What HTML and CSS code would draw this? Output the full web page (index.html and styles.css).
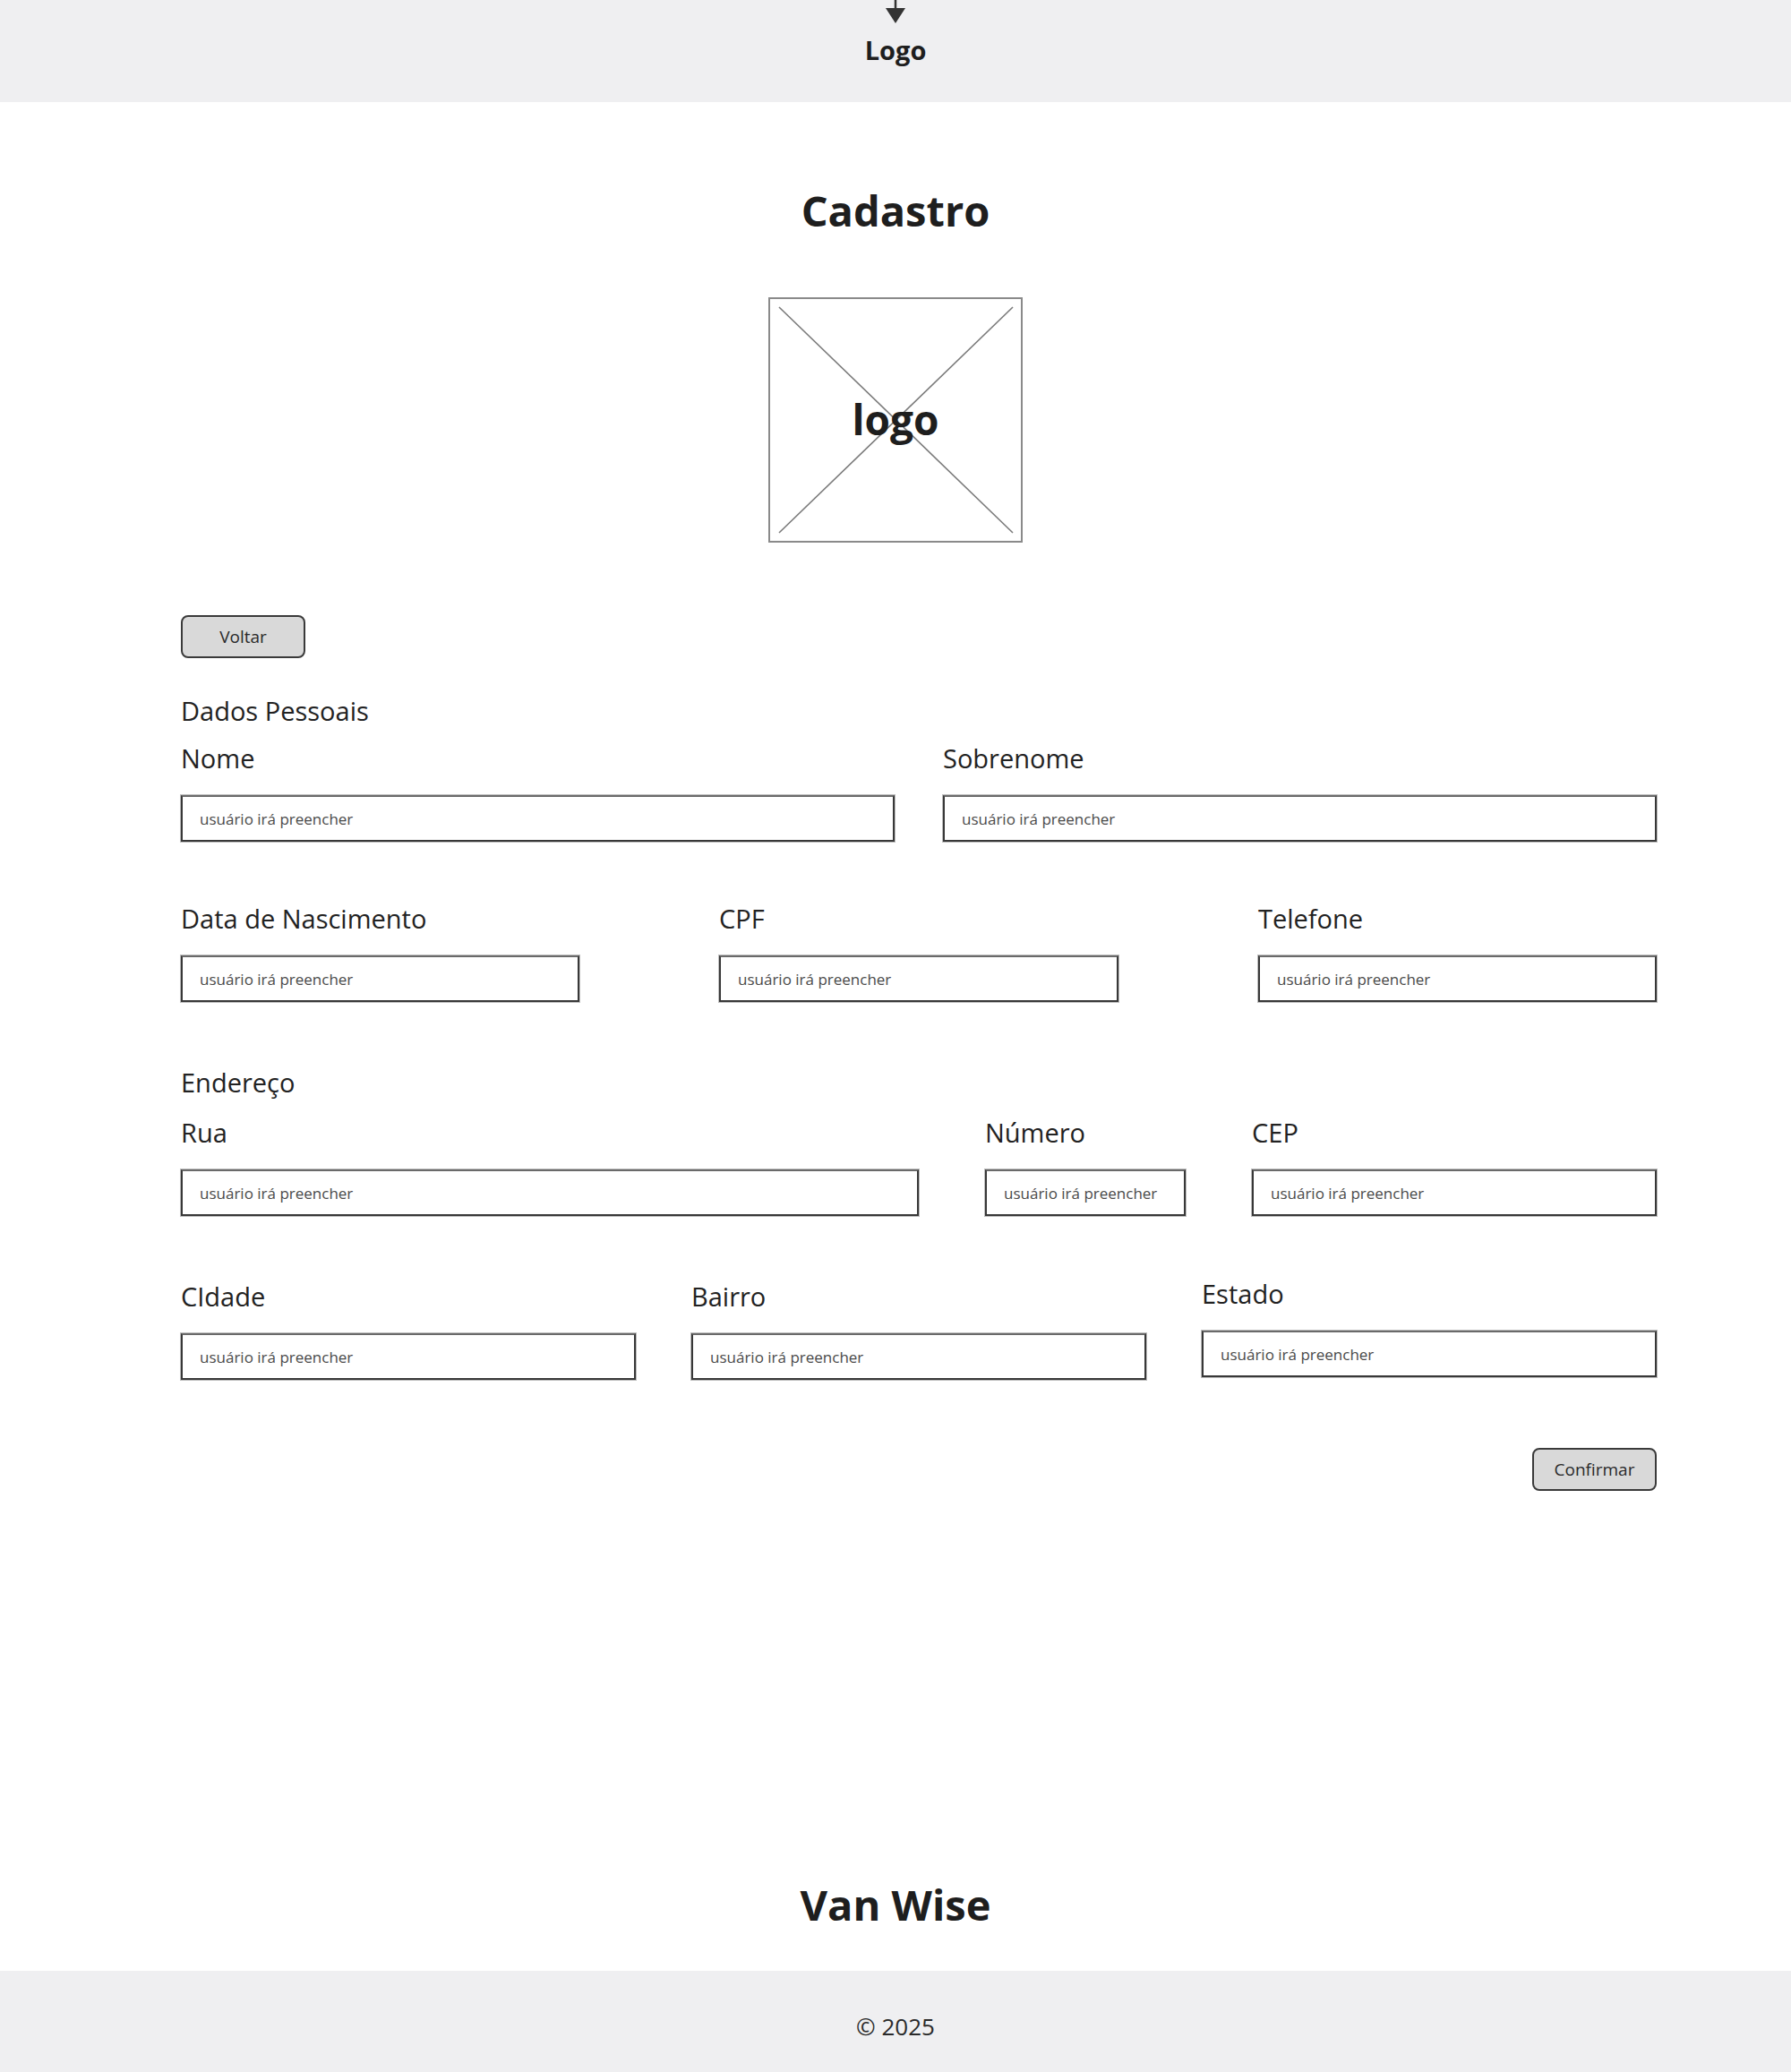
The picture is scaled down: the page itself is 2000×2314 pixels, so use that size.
FILE: index.html
```html
<!DOCTYPE html>
<html lang="pt-BR">
<head>
<meta charset="utf-8">
<title>Cadastro - Van Wise</title>
<link rel="stylesheet" href="styles.css">
</head>
<body>
<div class="page">
  <header class="topbar">
    <svg class="arrow" width="24" height="26" viewBox="0 0 24 26" aria-hidden="true">
      <line x1="12" y1="0" x2="12" y2="12" stroke="#333" stroke-width="2.5"/>
      <path d="M1 9 L23 9 L12 26 Z" fill="#333"/>
    </svg>
    <div class="topbar-logo">Logo</div>
  </header>

  <main class="content">
    <h1 class="title">Cadastro</h1>

    <div class="logo-box">
      <svg class="logo-x" width="284" height="274" viewBox="0 0 284 274" aria-hidden="true">
        <line x1="12" y1="11" x2="273" y2="263" stroke="#7a7a7a" stroke-width="1.6"/>
        <line x1="273" y1="11" x2="12" y2="263" stroke="#7a7a7a" stroke-width="1.6"/>
      </svg>
      <span class="logo-text">logo</span>
    </div>

    <div class="form">
      <div class="row-left">
        <button class="btn" type="button">Voltar</button>
      </div>

      <div class="section-title first">Dados Pessoais</div>
      <div class="row row-2">
        <div class="field"><label>Nome</label><div class="input">usuário irá preencher</div></div>
        <div class="field"><label>Sobrenome</label><div class="input">usuário irá preencher</div></div>
      </div>

      <div class="row row-3a spaced">
        <div class="field"><label>Data de Nascimento</label><div class="input">usuário irá preencher</div></div>
        <div class="field"><label>CPF</label><div class="input">usuário irá preencher</div></div>
        <div class="field"><label>Telefone</label><div class="input">usuário irá preencher</div></div>
      </div>

      <div class="section-title addr">Endereço</div>
      <div class="row row-3b">
        <div class="field"><label>Rua</label><div class="input">usuário irá preencher</div></div>
        <div class="field"><label>Número</label><div class="input">usuário irá preencher</div></div>
        <div class="field"><label>CEP</label><div class="input">usuário irá preencher</div></div>
      </div>

      <div class="row row-3c spaced2">
        <div class="field"><label>CIdade</label><div class="input">usuário irá preencher</div></div>
        <div class="field"><label>Bairro</label><div class="input">usuário irá preencher</div></div>
        <div class="field up"><label>Estado</label><div class="input">usuário irá preencher</div></div>
      </div>

      <div class="row-right">
        <button class="btn" type="button">Confirmar</button>
      </div>
    </div>
  </main>

  <div class="brand">Van Wise</div>
  <footer class="footer">© 2025</footer>
</div>
</body>
</html>
```

FILE: styles.css
```css
* { box-sizing: border-box; }

html, body {
  margin: 0;
  padding: 0;
  background: #ffffff;
  font-family: "Open Sans", "Noto Sans", "Liberation Sans", sans-serif;
  color: #222;
}

.page {
  min-height: 2314px;
  display: flex;
  flex-direction: column;
}

.topbar {
  height: 114px;
  background: #efeff1;
  display: flex;
  flex-direction: column;
  align-items: center;
}

.arrow { display: block; }

.topbar-logo {
  margin-top: 11px;
  font-size: 29px;
  line-height: 38px;
  font-weight: 700;
  color: #1e1e1e;
}

.content {
  display: flex;
  flex-direction: column;
  align-items: center;
}

.title {
  margin: 90px 0 0;
  font-size: 47px;
  line-height: 62px;
  font-weight: 700;
  color: #1e1e1e;
}

.logo-box {
  margin-top: 66px;
  width: 284px;
  height: 274px;
  border: 2px solid #8a8a8a;
  position: relative;
  display: flex;
  align-items: center;
  justify-content: center;
}

.logo-x {
  position: absolute;
  left: -2px;
  top: -2px;
}

.logo-text {
  position: relative;
  font-size: 46px;
  font-weight: 700;
  color: #1e1e1e;
  line-height: 1;
  margin-top: -2px;
}

.form {
  align-self: stretch;
  padding: 0 150px 0 202px;
  margin-top: 81px;
  display: flex;
  flex-direction: column;
}

.row-left { display: flex; }
.row-right { display: flex; justify-content: flex-end; margin-top: 76px; }

.btn {
  width: 139px;
  height: 48px;
  background: #d9d9d9;
  border: 2px solid #3a3a3a;
  border-radius: 8px;
  font-family: "Open Sans", "Noto Sans", sans-serif;
  font-size: 19px;
  color: #2a2a2a;
  padding: 0;
}

.section-title {
  font-size: 29px;
  line-height: 40px;
  color: #222;
}
.section-title.first { margin-top: 39px; margin-bottom: 13px; }
.section-title.addr { margin-top: 70px; margin-bottom: 16px; }

.row { display: grid; }
.row-2 { grid-template-columns: 1fr 1fr; column-gap: 54px; }
.row-3a { grid-template-columns: 445px 446px 445px; justify-content: space-between; }
.row-3b { grid-template-columns: 824px 224px 452px; justify-content: space-between; }
.row-3c { grid-template-columns: 508px 508px 508px; justify-content: space-between; }
.spaced { margin-top: 66px; }
.spaced2 { margin-top: 70px; }

.field {
  display: flex;
  flex-direction: column;
}
.field.up { margin-top: -3px; }

.field label {
  font-size: 29px;
  line-height: 40px;
  color: #222;
}

.input {
  margin-top: 21px;
  height: 52px;
  border: 2px solid #383838;
  border-top-color: #6a6a6a;
  box-shadow: 0 0 0 1px #bdbdbd;
  background: #fff;
  display: flex;
  align-items: center;
  padding-left: 19px;
  font-size: 17px;
  color: #4a4a4a;
  white-space: nowrap;
  overflow: hidden;
}

.brand {
  margin-top: auto;
  margin-bottom: 43px;
  text-align: center;
  font-size: 47px;
  line-height: 62px;
  font-weight: 700;
  color: #1e1e1e;
}

.footer {
  height: 113px;
  background: #efeff1;
  text-align: center;
  font-size: 26px;
  line-height: 36px;
  padding-top: 44px;
  color: #2a2a2a;
}
```
